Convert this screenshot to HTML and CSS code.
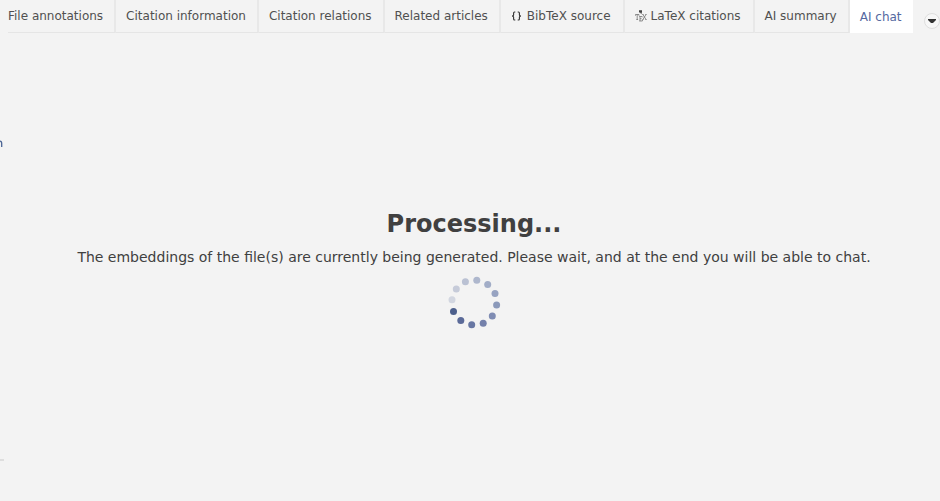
FILE: index.html
```
<!DOCTYPE html>
<html lang="en">
<head>
<meta charset="utf-8">
<title>Entry editor</title>
<link rel="stylesheet" href="styles.css">
</head>
<body>
<div class="editor">
  <aside class="rail">
    <svg class="rail-mark" width="4" height="10" viewBox="0 0 4 10" aria-hidden="true"><path d="M0 2.200C1.600 2.200 1.700 3.500 1.700 4.500V8" fill="none" stroke="#4a6494" stroke-width="1.300"/></svg>
    <span class="rail-line"></span>
  </aside>
  <main class="pane">
    <header class="tabbar">
      <div class="tabs" role="tablist">
        <button class="tab" role="tab">File annotations</button>
        <button class="tab" role="tab">Citation information</button>
        <button class="tab" role="tab">Citation relations</button>
        <button class="tab" role="tab">Related articles</button>
        <button class="tab tab-icon" role="tab">
          <svg width="12" height="12" viewBox="0 0 12 12" fill="none" stroke="#333" stroke-width="1.100" aria-hidden="true"><path d="M4.300 2H3.500Q2.600 2 2.600 3V5Q2.600 6 1 6Q2.600 6 2.600 7V9Q2.600 10 3.500 10H4.300M6.700 2H7.500Q8.400 2 8.400 3V5Q8.400 6 10 6Q8.400 6 8.400 7V9Q8.400 10 7.500 10H6.700"/></svg>
          BibTeX source
        </button>
        <button class="tab tab-icon" role="tab">
          <svg width="12" height="12" viewBox="0 0 12 12" fill="none" stroke="#666" stroke-width=".7" aria-hidden="true"><path d="M.4 5.800V4.500H4V5.800M2.200 4.500V9.500M1.300 9.500H3.100M4.200 6.500H7.200V7.400M5 6.500V11M5 8.700H6.600M4.200 11H7.400V10M7.900 4.500L11 9.500M11 4.500L7.900 9.500M7.400 4.500H8.600M10.300 4.500H11.600M7.400 9.500H8.600M10.300 9.500H11.600"/><path d="M4 .3H7V2.500L5.600 3.600L5.200 2.500H4Z" fill="#444" stroke="none"/><path d="M6 3L7 4.300"/></svg>
          LaTeX citations
        </button>
        <button class="tab" role="tab">AI summary</button>
        <button class="tab tab-active" role="tab" aria-selected="true">AI chat</button>
      </div>
      <button class="more" aria-label="Show all tabs"><svg width="8" height="4" viewBox="0 0 8 4" aria-hidden="true"><path d="M0 0H8V1L5 4H3L0 1Z" fill="#333"/></svg></button>
    </header>
    <section class="status">
      <h1>Processing...</h1>
      <p>The embeddings of the file(s) are currently being generated. Please wait, and at the end you will be able to chat.</p>
      <svg class="spinner" width="56" height="54" viewBox="447 275 56 54" role="img" aria-label="Loading">
        <circle cx="453" cy="299.800" r="3.500" fill="#d2d6e0"/>
        <circle cx="457.300" cy="289" r="3.500" fill="#c6cbd9"/>
        <circle cx="466.400" cy="281.800" r="3.500" fill="#bac1d3"/>
        <circle cx="477.800" cy="280.200" r="3.500" fill="#aeb7cd"/>
        <circle cx="488.700" cy="284.500" r="3.500" fill="#a2adc7"/>
        <circle cx="496" cy="293.600" r="3.500" fill="#97a3c1"/>
        <circle cx="497.600" cy="305" r="3.500" fill="#8b99ba"/>
        <circle cx="493.300" cy="316" r="3.500" fill="#7f8cb3"/>
        <circle cx="484.200" cy="323.200" r="3.500" fill="#7480aa"/>
        <circle cx="472.700" cy="324.800" r="3.500" fill="#6877a3"/>
        <circle cx="461.800" cy="320.600" r="3.500" fill="#5b6a98"/>
        <circle cx="454.500" cy="311.400" r="3.500" fill="#4c5f8c"/>
      </svg>
    </section>
  </main>
</div>
</body>
</html>
```
FILE: styles.css
```
* { box-sizing: border-box; }
body {
  margin: 0;
  background: #f3f3f3;
  color: #404040;
  font-family: "DejaVu Sans", sans-serif;
}
.editor {
  display: grid;
  grid-template-columns: 8px 1fr;
  min-height: 100vh;
}
.rail {
  display: flex;
  flex-direction: column;
  justify-content: space-between;
  padding: 139px 0 40px;
}
.rail-line { width: 4px; height: 2px; background: #dedede; }
.pane { display: flex; flex-direction: column; min-width: 0; }
.tabbar { display: flex; justify-content: space-between; }
.tabs { display: flex; height: 33px; }
.tab {
  display: flex;
  align-items: center;
  gap: 3px;
  padding: 0 11px 0 10px;
  border: 0;
  border-right: 2px solid #e8e8e8;
  border-bottom: 1px solid #e5e5e5;
  background: none;
  color: #505050;
  font: 12px/16px "DejaVu Sans", sans-serif;
  white-space: nowrap;
}
.tab:first-child { padding-left: 0; }
.tab-icon { gap: 4px; padding-right: 12px; }
.tab-active {
  border: 0;
  background: #fff;
  color: #5468a0;
}
.more {
  display: grid;
  place-items: center;
  width: 16px;
  height: 16px;
  margin-top: 13px;
  padding: 0;
  border: 1px solid #dedede;
  border-radius: 50%;
  background: #f7f7f7;
}
.status {
  flex: 1;
  display: flex;
  flex-direction: column;
  align-items: center;
  justify-content: center;
  gap: 8px;
  padding-top: 4px;
  text-align: center;
}
h1 { margin: 0; font-size: 24px; line-height: 30px; }
p { margin: 0; font-size: 14px; line-height: 20px; }
.spinner { display: block; }
```
